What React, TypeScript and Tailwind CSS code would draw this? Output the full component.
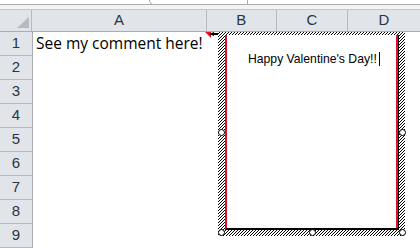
import React from "react";

const rows = [1, 2, 3, 4, 5, 6, 7, 8, 9];

function Handle({ className }: { className: string }) {
  return (
    <div
      className={`absolute w-[7px] h-[7px] rounded-full bg-white border border-black ${className}`}
    />
  );
}

function Hatch() {
  return (
    <svg className="absolute inset-0" width="187" height="208" shapeRendering="crispEdges">
      <defs>
        <pattern id="hatch" width="3" height="3" patternUnits="userSpaceOnUse">
          <rect width="3" height="3" fill="#fff" />
          <rect x="2" y="0" width="1" height="1" fill="#000" />
          <rect x="1" y="1" width="1" height="1" fill="#000" />
          <rect x="0" y="2" width="1" height="1" fill="#000" />
        </pattern>
      </defs>
      <rect width="187" height="208" fill="url(#hatch)" />
    </svg>
  );
}

export default function App() {
  return (
    <div className="w-[420px] h-[248px] overflow-hidden bg-white relative font-['Liberation_Sans',Arial,sans-serif]">
      {/* top strip */}
      <div className="relative">
        <div className="h-[4px] bg-white" />
        <div className="h-[1px] bg-[#a9abae]" />
        <div className="h-[4px] bg-[#f3f4f5]" />
        <div className="h-[1px] bg-[#c3c6ca]" />
        <div className="absolute left-[149px] top-0 w-[99px] h-[5px] border-x border-b border-[#a9abae] rounded-bl-[5px] bg-white" />
      </div>

      {/* column header */}
      <div className="flex h-[22px] bg-[#e1e4e8] border-b border-[#a9adb3] text-[15px] text-[#2a3546]">
        <div className="w-[33px] border-r border-[#b6babf] relative">
          <svg className="absolute left-0 top-0" width="33" height="21">
            <polygon points="29,7 29,18 17,18" fill="#b7bbc0" />
          </svg>
        </div>
        <div className="w-[178px] border-r border-[#b6babf] flex items-center justify-center">A</div>
        <div className="w-[72px] border-r border-[#b6babf] flex items-center justify-center">B</div>
        <div className="w-[72px] border-r border-[#b6babf] flex items-center justify-center">C</div>
        <div className="w-[74px] flex items-center justify-center">D</div>
      </div>

      {/* body */}
      <div className="relative flex h-[216px] overflow-hidden">
        <div className="w-[33px] bg-[#e1e4e8] border-r border-[#a9adb3] text-[15px] text-[#2a3546] shrink-0">
          {rows.map((r) => (
            <div
              key={r}
              className="h-[24px] border-b border-[#b6babf] flex items-center justify-center"
            >
              {r}
            </div>
          ))}
        </div>
        <div className="flex-1">
          <div className="h-[24px] pl-[3px] flex items-center text-[15.5px] text-black font-['Open_Sans',sans-serif] whitespace-nowrap">
            See my comment here!
          </div>
        </div>

        {/* comment indicator */}
        <svg className="absolute left-[205px] top-0" width="6" height="6">
          <polygon points="0,0 6,0 6,6" fill="#e8141b" />
        </svg>
        <svg className="absolute left-[209px] top-0" width="11" height="5">
          <polygon points="0,2 5,0 5,4" fill="#000" />
          <line x1="4" y1="2" x2="11" y2="2" stroke="#000" strokeWidth="2" />
        </svg>

        {/* comment box */}
        <div className="absolute left-[218px] top-[-4px] w-[187px] h-[208px]">
          <Hatch />
          <div className="absolute left-[7px] top-[7px] right-[6px] bottom-[6px] bg-white border-l-2 border-[#e0102a] border-b-2 border-b-black">
            <div className="absolute inset-0 border-r border-black">
              <div className="absolute inset-0 border-r-2 border-[#e0102a]" />
            </div>
            <div className="relative pl-[21px] pt-[15px] flex items-center text-[12.2px] text-black whitespace-nowrap font-['Liberation_Sans',Arial,sans-serif]">
              Happy Valentine's Day!!
              <span className="ml-[2px] inline-block w-[1px] h-[14px] bg-black" />
            </div>
          </div>
          <Handle className="left-0 top-[101px]" />
          <Handle className="right-[-1px] top-[101px]" />
          <Handle className="left-0 bottom-0" />
          <Handle className="left-[91px] bottom-0" />
          <Handle className="right-[-1px] bottom-0" />
        </div>
      </div>
    </div>
  );
}
